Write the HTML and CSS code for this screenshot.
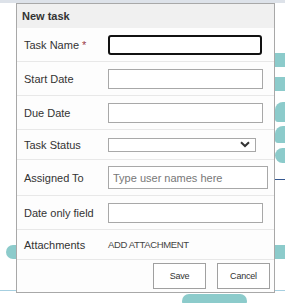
FILE: index.html
```html
<!DOCTYPE html>
<html>
<head>
<meta charset="utf-8">
<link rel="stylesheet" href="styles.css">
</head>
<body>
<div class="page">
  <div class="backdrop">
    <div class="strip"></div>
    <div class="blk b1"></div>
    <div class="blk b2"></div>
    <div class="blk b3"></div>
    <div class="blk b4"></div>
    <div class="blk b5"></div>
    <div class="blk b6"></div>
    <div class="blk b7"></div>
    <div class="blk pill"></div>
    <div class="line dark"></div>
    <div class="line lb-left"></div>
    <div class="line lb-right"></div>
  </div>
  <div class="dialog">
    <div class="header">New task</div>
    <div class="row h33">
      <div class="label">Task Name <span class="req">*</span></div>
      <input class="field focus w154 h20" type="text">
    </div>
    <div class="row h33">
      <div class="label">Start Date</div>
      <input class="field w155 h20" type="text">
    </div>
    <div class="row h33">
      <div class="label">Due Date</div>
      <input class="field w155 h20" type="text">
    </div>
    <div class="row h29">
      <div class="label">Task Status</div>
      <div class="select">
        <svg width="10" height="7" viewBox="0 0 10 7"><path d="M1 1.2 L5 5 L9 1.2" fill="none" stroke="#333" stroke-width="2"/></svg>
      </div>
    </div>
    <div class="row h35">
      <div class="label">Assigned To</div>
      <input class="field w160 h23" type="text" placeholder="Type user names here">
    </div>
    <div class="row h33">
      <div class="label">Date only field</div>
      <input class="field w155 h20" type="text">
    </div>
    <div class="row h29">
      <div class="label">Attachments</div>
      <div class="attach">ADD ATTACHMENT</div>
    </div>
    <div class="footer">
      <button class="btn">Save</button>
      <button class="btn">Cancel</button>
    </div>
  </div>
</div>
</body>
</html>
```
FILE: styles.css
```css
* { box-sizing: border-box; }
html, body { margin: 0; padding: 0; background: #fff; }
body { font-family: "Liberation Sans", Arial, sans-serif; color: #333; }
.page { position: relative; width: 285px; height: 303px; overflow: hidden; }
.backdrop { position: absolute; inset: 0; }
.strip { position: absolute; left: 0; top: 0; width: 285px; height: 3px; background: #dde2e9; }
.blk { position: absolute; background: #8ccbcb; }
.b1 { left: 275px; top: 53px; width: 10px; height: 14px; }
.b2 { left: 275px; top: 77px; width: 10px; height: 14px; }
.b3 { left: 275px; top: 102px; width: 10px; height: 20px; border-radius: 8px 0 0 3px; }
.b4 { left: 275px; top: 126px; width: 10px; height: 17px; border-radius: 8px 0 0 3px; }
.b5 { left: 275px; top: 148px; width: 10px; height: 15px; border-radius: 8px 0 0 8px; }
.b6 { left: 275px; top: 245px; width: 10px; height: 14px; }
.b7 { left: 6px; top: 245px; width: 12px; height: 14px; border-radius: 7px 0 0 7px; }
.pill { left: 182px; top: 294px; width: 65px; height: 14px; border-radius: 7px; }
.line { position: absolute; height: 1px; }
.dark { left: 275px; top: 179px; width: 10px; background: #34578f; }
.lb-left { left: 0; top: 290px; width: 17px; background: #a6cfe0; }
.lb-right { left: 274px; top: 290px; width: 11px; background: #a6cfe0; }

.dialog {
  position: relative;
  margin: 3px 0 0 16px;
  width: 259px;
  border: 1px solid #a8a8a8;
  background: #fff;
  display: flex;
  flex-direction: column;
}
.header {
  height: 24px;
  background: #f0f0f0;
  font-weight: bold;
  font-size: 11px;
  padding-left: 5px;
  display: flex;
  align-items: center;
  color: #333;
}
.row {
  display: flex;
  align-items: center;
  border-bottom: 1px solid #e8e8e8;
  background: #fdfdfd;
}
.h33 { height: 34px; }
.h29 { height: 30px; }
.h35 { height: 36px; }
.label {
  width: 91px;
  padding-left: 7px;
  font-size: 11px;
  color: #333;
  flex-shrink: 0;
}
.req { color: #9a3a48; }
.field {
  margin: 0;
  padding: 0 0 0 4px;
  border: 1px solid #a8a8a8;
  background: #fff;
  font-family: "Liberation Sans", Arial, sans-serif;
  font-size: 11px;
  color: #333;
  outline: none;
}
.field::placeholder { color: #777; }
.focus { border: 2px solid #111; border-radius: 3px; }
.w154 { width: 154px; }
.w155 { width: 155px; }
.w160 { width: 160px; }
.h20 { height: 20px; }
.h23 { height: 23px; }
.select {
  width: 148px;
  height: 14px;
  border: 1px solid #a8a8a8;
  background: #fff;
  display: flex;
  align-items: center;
  justify-content: flex-end;
  padding-right: 5px;
}
.select svg { display: block; }
.attach {
  font-size: 9.5px;
  letter-spacing: -0.35px;
  color: #444;
}
.footer {
  height: 32px;
  display: flex;
  justify-content: flex-end;
  align-items: center;
  gap: 11px;
  padding-right: 4px;
  background: #fdfdfd;
}
.btn {
  width: 53px;
  height: 26px;
  margin: 0;
  padding: 0;
  border: 1px solid #a0a0a0;
  background: #fff;
  font-family: "Liberation Sans", Arial, sans-serif;
  font-size: 9px;
  letter-spacing: -0.2px;
  color: #333;
}
```
